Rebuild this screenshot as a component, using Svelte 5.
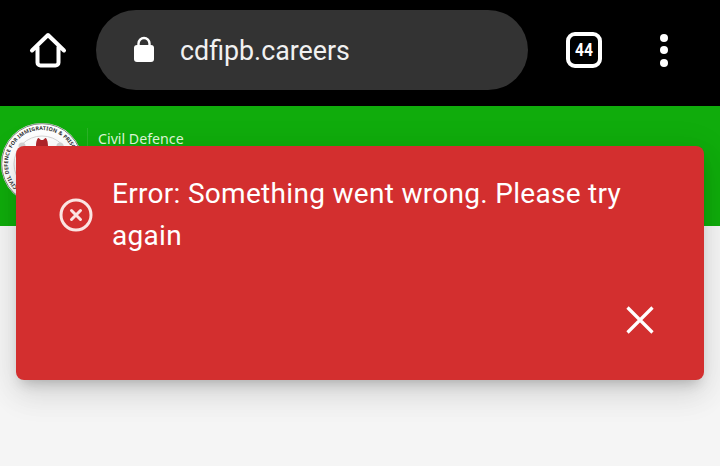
<script>
  const title = 'Error: Something went wrong. Please try again';
</script>

<div class="page">
  <header class="chrome">
    <svg class="home" viewBox="0 0 38 38" width="38" height="38" aria-hidden="true">
      <path d="M3 19.500 19 4l16 15.500M8.500 16v15.500a3 3 0 0 0 3 3h15a3 3 0 0 0 3-3V16" fill="none" stroke="#fff" stroke-width="4" stroke-linecap="round" stroke-linejoin="round"/>
    </svg>
    <div class="omnibox">
      <svg class="lock" viewBox="0 0 22 28" width="22" height="28" aria-hidden="true">
        <path d="M5.500 12V8.500a5.500 5.500 0 0 1 11 0V12" fill="none" stroke="#fff" stroke-width="2.400"/>
        <rect x="1" y="10" width="20" height="17" rx="3" fill="#fff"/>
      </svg>
      <span class="url">cdfipb.careers</span>
    </div>
    <div class="tabs"><span>44</span></div>
    <div class="menu"><i></i><i></i><i></i></div>
  </header>

  <section class="band">
    <svg class="seal" viewBox="0 0 84 84" width="84" height="84" aria-hidden="true">
      <circle cx="42" cy="42" r="41" fill="#fff"/>
      <circle cx="42" cy="42" r="40.300" fill="none" stroke="#666" stroke-width=".8"/>
      <circle cx="42" cy="42" r="28" fill="none" stroke="#ccc" stroke-width=".8"/>
      <path id="ring" d="M17.500 65.500A34 34 0 1 1 66.500 65.500" fill="none"/>
      <text class="ring-text"><textPath href="#ring">CIVIL DEFENCE FOR IMMIGRATION &amp; PRISONS</textPath></text>
      <path d="M36 24c0-5 1.500-8 2.500-8s1 2 3.500 2 2.500-2 3.500-2 2.500 3 2.500 8z" fill="#b3262b"/>
      <circle cx="60" cy="24" r="3.500" fill="#d4d4d4"/>
      <circle cx="22" cy="24" r="3.500" fill="#d4d4d4"/>
    </svg>
    <div class="divider"></div>
    <div class="org">Civil Defence</div>
  </section>

  <main class="body"></main>

  <div class="toast" role="alert">
    <div class="message">
      <svg class="err" viewBox="0 0 34 34" width="34" height="34" aria-hidden="true">
        <circle cx="17" cy="17" r="15" fill="none" stroke="#fbe4e2" stroke-width="3"/>
        <path d="M12.500 12.500l9 9m0-9l-9 9" fill="none" stroke="#fbe4e2" stroke-width="3" stroke-linecap="round"/>
      </svg>
      <p>{title}</p>
    </div>
    <div class="actions">
      <svg viewBox="0 0 30 30" width="30" height="30" aria-hidden="true">
        <path d="M2.500 2.500l25 25m0-25l-25 25" fill="none" stroke="#fff" stroke-width="3.200"/>
      </svg>
    </div>
  </div>
</div>

<style>
  :global(body) { margin: 0; background: #f5f5f5; }
  .page { position: relative; width: 720px; height: 466px; overflow: hidden; background: #f5f5f5; font-family: Roboto, "Liberation Sans", sans-serif; }

  .chrome { height: 106px; background: #000; display: flex; align-items: center; padding-bottom: 6px; box-sizing: border-box; }
  .home { margin-left: 29px; flex: none; }
  .omnibox { margin-left: 29px; width: 432px; height: 80px; border-radius: 40px; background: #333; display: flex; align-items: center; box-sizing: border-box; padding-left: 37px; flex: none; }
  .lock { flex: none; margin-top: -2px; }
  .url { margin-left: 25px; margin-top: 1px; color: #f1f1f1; font-size: 26.800px; line-height: 30px; }
  .tabs { margin-left: 38px; width: 36px; height: 36px; box-sizing: border-box; border: 4px solid #fff; border-radius: 9px; color: #fff; font: 700 19px/28px Roboto, sans-serif; display: flex; justify-content: center; flex: none; }
  .tabs span { display: block; transform: scaleX(.82); }
  .menu { margin-left: 51px; width: 22px; display: flex; flex-direction: column; align-items: center; gap: 4.500px; flex: none; }
  .menu i { width: 8px; height: 8px; border-radius: 50%; background: #fff; display: block; }

  .band { height: 120px; background: #10ac0c; display: flex; align-items: flex-start; box-sizing: border-box; padding-top: 16px; }
  .seal { flex: none; }
  .ring-text { font: 700 5.300px "Noto Sans", sans-serif; fill: #333; letter-spacing: .12px; }
  .divider { margin-left: 3px; margin-top: 6px; width: 1px; height: 40px; background: #2cb328; flex: none; }
  .org { margin-left: 10px; margin-top: 8px; color: #dff8d8; font: 14.200px/18px "Noto Sans", sans-serif; }

  .body { height: 240px; }

  .toast { position: absolute; left: 16px; top: 146px; width: 688px; height: 234px; box-sizing: border-box; background: #d32f2f; border-radius: 8px; box-shadow: 0 8px 14px -6px rgba(0,0,0,.24), 0 16px 30px 2px rgba(0,0,0,.08), 0 6px 36px 6px rgba(0,0,0,.05); color: #fff; padding: 27px 0 0 43px; }
  .message { display: flex; align-items: flex-start; }
  .err { flex: none; margin-top: 25px; }
  p { margin: 0 0 0 19px; width: 525px; font-size: 28px; line-height: 42px; letter-spacing: .3px; color: #fff; }
  .actions { position: absolute; right: 49px; bottom: 45px; width: 30px; height: 30px; }
  .actions svg { display: block; }
</style>
